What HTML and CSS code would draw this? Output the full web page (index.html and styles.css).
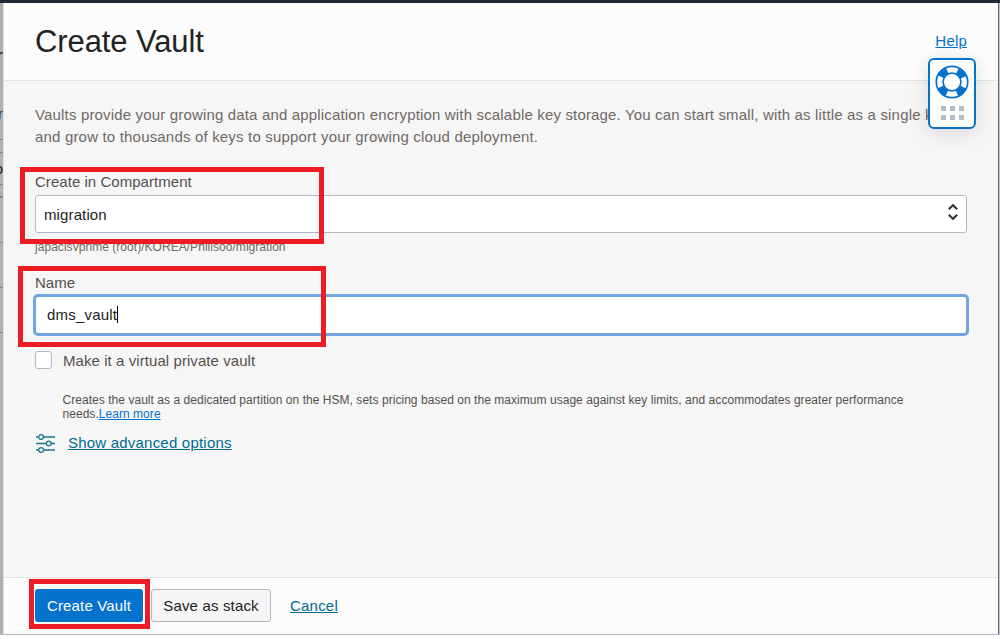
FILE: index.html
```html
<!DOCTYPE html>
<html lang="en">
<head>
<meta charset="utf-8">
<title>Create Vault</title>
<link rel="stylesheet" href="styles.css">
</head>
<body>
<div class="topbar"></div>
<div class="stage">
  <div class="backdrop">
    <span class="peek peek-title">r</span>
    <span class="peek peek-link">r</span>
    <span class="peek peek-text">o</span>
    <i class="rule r1"></i><i class="rule r2"></i><i class="rule r3"></i><i class="rule r4"></i><i class="rule r5"></i><i class="rule r6"></i><i class="rule r7"></i>
  </div>
  <main class="panel">
    <header class="head">
      <h1 class="title">Create Vault</h1>
      <a class="help">Help</a>
    </header>
    <section class="content">
      <p class="intro"><span class="intro-first">Vaults provide your growing data and application encryption with scalable key storage. You can start small, with as little as a single key</span><br>and grow to thousands of keys to support your growing cloud deployment.</p>
      <label class="label">Create in Compartment</label>
      <div class="select"><span class="select-value">migration</span>
        <svg class="chev" width="12" height="18" viewBox="0 0 12 18"><path d="M1.8 6.3 6 2.2l4.2 4.1M1.8 11.7 6 15.8l4.2-4.1" fill="none" stroke="#333" stroke-width="2"/></svg>
      </div>
      <div class="path">japacisvprime (root)/KOREA/Philisoo/migration</div>
      <label class="label name-label">Name</label>
      <div class="input"><span class="input-value">dms_vault</span><i class="caret"></i></div>
      <div class="check-row"><span class="checkbox"></span><span class="check-text">Make it a virtual private vault</span></div>
      <p class="hint">Creates the vault as a dedicated partition on the HSM, sets pricing based on the maximum usage against key limits, and accommodates greater performance<br>needs.<a class="learn">Learn more</a></p>
      <div class="advanced">
        <svg width="20" height="20" viewBox="0 0 20 20" fill="none" stroke="#1c7690" stroke-width="1.3"><path d="M1 4h2.6M8.6 4H20M1 10.5h10M16 10.5h4M1 17h2.6M8.6 17H20"/><circle cx="6.1" cy="4" r="2.4"/><circle cx="13.7" cy="10.5" r="2.4"/><circle cx="6.1" cy="17" r="2.4"/></svg>
        <a class="adv-link">Show advanced options</a>
      </div>
    </section>
    <footer class="foot">
      <span class="btn primary">Create Vault</span>
      <span class="btn secondary">Save as stack</span>
      <a class="cancel">Cancel</a>
    </footer>
  </main>
  <div class="edge"></div>
</div>
<div class="bottom"></div>
<div class="support">
  <svg class="buoy" width="34" height="34" viewBox="0 0 34 34"><circle cx="17" cy="17" r="12.2" fill="none" stroke="#0572ce" stroke-width="7" stroke-dasharray="8.8 10.364" stroke-dashoffset="-5.182"/><circle cx="17" cy="17" r="15.7" fill="none" stroke="#0572ce" stroke-width="1.7"/><circle cx="17" cy="17" r="8.9" fill="#fff" stroke="#0572ce" stroke-width="1.7"/></svg>
  <div class="dots"><i></i><i></i><i></i><i></i><i></i><i></i></div>
</div>
<div class="mark mark-compartment"></div>
<div class="mark mark-name"></div>
<div class="mark mark-create"></div>
</body>
</html>
```
FILE: styles.css
```css
* { box-sizing: border-box; }
body { margin: 0; width: 1000px; height: 639px; overflow: hidden; position: relative; background: #fcfcfc; font: 15px/22px "Liberation Sans", Arial, sans-serif; color: #55504c; display: flex; flex-direction: column; }
span, a { white-space: nowrap; }
a { text-decoration: underline; }
.topbar { height: 3px; background: #1f2937; }
.stage { display: flex; height: 631px; }
.backdrop { position: relative; width: 4px; background: #b0b0b0; border-right: 1px solid #e4e4e4; overflow: hidden; }
.peek { position: absolute; right: 0; color: #222; }
.peek-title { top: 43px; font-size: 22px; }
.peek-link { top: 100px; color: #24406f; }
.peek-text { top: 155px; }
.rule { position: absolute; left: 0; width: 3px; height: 1px; background: #858585; }
.r1 { top: 136px; } .r2 { top: 149px; } .r3 { top: 181px; } .r4 { top: 193px; height: 2px; } .r5 { top: 239px; } .r6 { top: 284px; } .r7 { top: 329px; }
.panel { width: 994px; display: flex; flex-direction: column; }
.edge { width: 2px; border-left: 1px solid #626970; background: #c0c4c9; }
.bottom { height: 5px; border-top: 1px solid #b1b8c3; }
.head { height: 78px; padding: 0 31px; display: flex; justify-content: space-between; background: #fcfcfc; border-bottom: 1px solid #e4e4e4; }
.title { margin: 18px 0 0; font-size: 31px; line-height: 42px; font-weight: 400; letter-spacing: -.1px; color: #222; }
.help { margin-top: 27px; letter-spacing: .2px; color: #0572ce; }
.content { flex: 1; padding: 23px 31px 0; background: #f6f6f6; }
.intro { margin: 0; color: #6f6964; height: 67px; letter-spacing: .182px; white-space: nowrap; }
.intro-first { letter-spacing: .165px; }
.label { display: block; height: 24px; letter-spacing: .04px; }
.select { height: 38px; display: flex; align-items: center; justify-content: space-between; padding: 0 7px 0 8px; border: 1px solid #b1b8c3; border-radius: 3px; background: #fff; color: #222; }
.select-value { margin-top: 2px; letter-spacing: .12px; }
.chev { margin-top: -4px; }
.path { height: 39px; padding-top: 7px; font-size: 12px; line-height: 14px; letter-spacing: .04px; color: #6f6964; }
.name-label { height: 22px; }
.input { height: 42px; margin: 0 -2px; display: flex; align-items: center; padding-left: 11px; border: 3px solid #71a5e0; border-radius: 5px; background: #fff; color: #222; }
.input-value { letter-spacing: .2px; }
.caret { width: 1px; height: 17px; margin-top: -1px; background: #000; }
.check-row { display: flex; align-items: center; gap: 11px; height: 22px; margin-top: 13px; }
.check-text { margin-top: 2px; letter-spacing: .07px; }
.checkbox { width: 17px; height: 18px; border: 1px solid #b1b8c3; border-radius: 3px; background: #fff; }
.hint { margin: 22px 0 0 27.5px; font-size: 12px; line-height: 14px; letter-spacing: .043px; white-space: nowrap; }
.learn { color: #0572ce; }
.advanced { display: flex; align-items: center; gap: 13px; height: 22px; margin-top: 11px; }
.adv-link, .cancel { color: #006b8f; letter-spacing: .21px; }
.foot { height: 57px; display: flex; align-items: flex-start; padding: 11px 31px; background: #fcfcfc; border-top: 1px solid #e4e4e4; }
.btn { height: 33px; display: flex; align-items: center; justify-content: center; border-radius: 3px; letter-spacing: .16px; }
.primary { width: 108px; background: #0572ce; color: #fff; }
.secondary { width: 120px; margin-left: 8px; background: #f5f5f5; border: 1px solid #b1b8c3; color: #222; }
.cancel { margin: 6px 0 0 19px; }
.support { position: absolute; left: 928px; top: 58px; width: 48px; height: 71px; padding-top: 5px; display: flex; flex-direction: column; align-items: center; border: 2px solid #0572ce; border-radius: 6px; background: #fff; box-shadow: 0 4px 20px rgba(0,0,0,.13); }
.buoy { margin-right: 1px; }
.dots { display: grid; grid-template-columns: repeat(3, 5px); grid-auto-rows: 5px; gap: 4px; margin-top: 7px; }
.dots i { background: #b6bcc6; }
.mark { position: absolute; border: 5px solid #ed1c24; }
.mark-compartment { left: 20px; top: 167px; width: 304px; height: 77px; }
.mark-name { left: 18px; top: 266px; width: 308px; height: 81px; }
.mark-create { left: 29px; top: 579px; width: 121px; height: 50px; }
```
